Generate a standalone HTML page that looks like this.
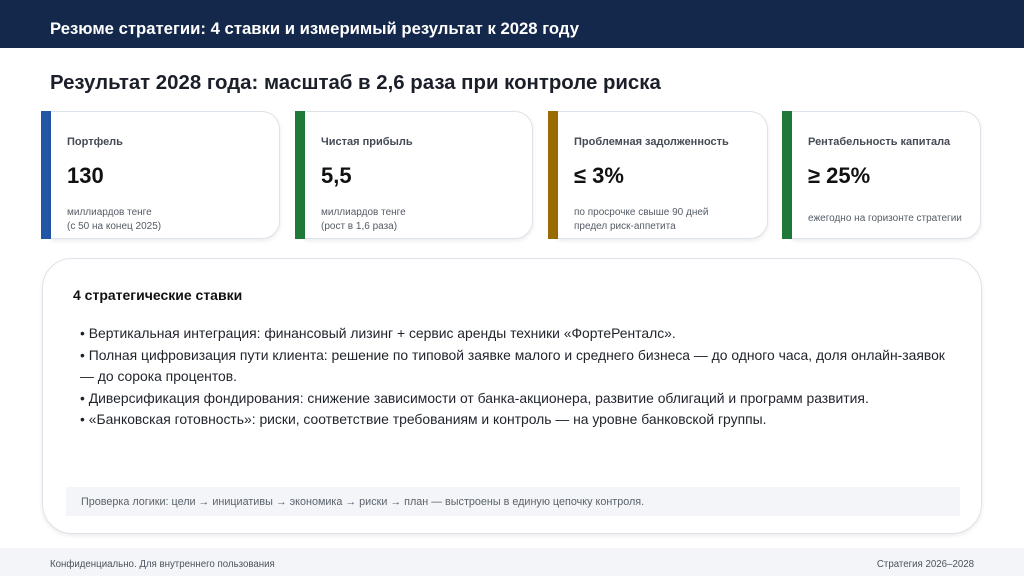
<!DOCTYPE html>
<html><head><meta charset="utf-8"><style>
*{margin:0;padding:0;box-sizing:border-box}
body{width:1024px;height:576px;background:#fff;font-family:"Liberation Sans","DejaVu Sans",sans-serif;position:relative;overflow:hidden;color:#1b1f2a}
.hdr{position:absolute;left:0;top:0;width:1024px;height:48px;background:#13284a;color:#fff;font-size:16.7px;font-weight:bold;padding:19px 0 0 50px}
h1{position:absolute;left:50px;top:72px;font-size:20.4px;font-weight:bold;color:#1b1f2a}
.bar{position:absolute;top:111px;width:10px;height:128px}
.card{position:absolute;top:111px;height:128px;background:#fff;border:1px solid #dde3ea;border-left:none;border-radius:0 18px 18px 0;box-shadow:0 2px 4px rgba(0,0,0,.08);padding:0 0 0 16px}
.card .t{position:absolute;left:16px;top:24px;font-size:11px;font-weight:bold;color:#444b55}
.card .v{position:absolute;left:16px;top:51px;font-size:22px;font-weight:bold;color:#111}
.card .s{position:absolute;left:16px;top:94px;font-size:10px;line-height:14px;color:#555c66}
.panel{position:absolute;left:42px;top:258px;width:940px;height:276px;border:1px solid #dde3ea;border-radius:30px;box-shadow:0 2px 4px rgba(0,0,0,.08)}
.panel h2{position:absolute;left:30px;top:28px;font-size:14px;font-weight:bold;color:#111}
.panel .b{position:absolute;left:37px;top:64px;width:900px;font-size:13.9px;line-height:21.5px;color:#1f232b}
.chk{position:absolute;left:23px;top:228px;width:894px;height:29px;background:#f3f5f8;font-size:10.8px;color:#5b626b;padding:9px 0 0 15px}
.ftr{position:absolute;left:0;top:548px;width:1024px;height:28px;background:#f3f5f8;font-size:9.7px;color:#4d545e}
</style></head><body>
<div class="hdr">Резюме стратегии: 4 ставки и измеримый результат к 2028 году</div>
<h1>Результат 2028 года: масштаб в 2,6 раза при контроле риска</h1>

<div class="bar" style="left:41px;background:#2257a7"></div>
<div class="card" style="left:51px;width:229px"><div class="t">Портфель</div><div class="v">130</div><div class="s">миллиардов тенге<br>(с 50 на конец 2025)</div></div>
<div class="bar" style="left:295px;background:#1f7a3a"></div>
<div class="card" style="left:305px;width:228px"><div class="t">Чистая прибыль</div><div class="v">5,5</div><div class="s">миллиардов тенге<br>(рост в 1,6 раза)</div></div>
<div class="bar" style="left:548px;background:#9a6a05"></div>
<div class="card" style="left:558px;width:210px"><div class="t">Проблемная задолженность</div><div class="v">≤ 3%</div><div class="s">по просрочке свыше 90 дней<br>предел риск-аппетита</div></div>
<div class="bar" style="left:782px;background:#1f7a3a"></div>
<div class="card" style="left:792px;width:189px"><div class="t">Рентабельность капитала</div><div class="v">≥ 25%</div><div class="s" style="top:100px">ежегодно на горизонте стратегии</div></div>

<div class="panel">
<h2>4 стратегические ставки</h2>
<div class="b">• Вертикальная интеграция: финансовый лизинг + сервис аренды техники «ФортеРенталс».<br>• Полная цифровизация пути клиента: решение по типовой заявке малого и среднего бизнеса — до одного часа, доля онлайн-заявок<br>— до сорока процентов.<br>• Диверсификация фондирования: снижение зависимости от банка-акционера, развитие облигаций и программ развития.<br>• «Банковская готовность»: риски, соответствие требованиям и контроль — на уровне банковской группы.</div>
<div class="chk">Проверка логики: цели → инициативы → экономика → риски → план — выстроены в единую цепочку контроля.</div>
</div>

<div class="ftr"><span style="position:absolute;left:50px;top:11px">Конфиденциально. Для внутреннего пользования</span><span style="position:absolute;right:50px;top:11px">Стратегия 2026–2028</span></div>
</body></html>
